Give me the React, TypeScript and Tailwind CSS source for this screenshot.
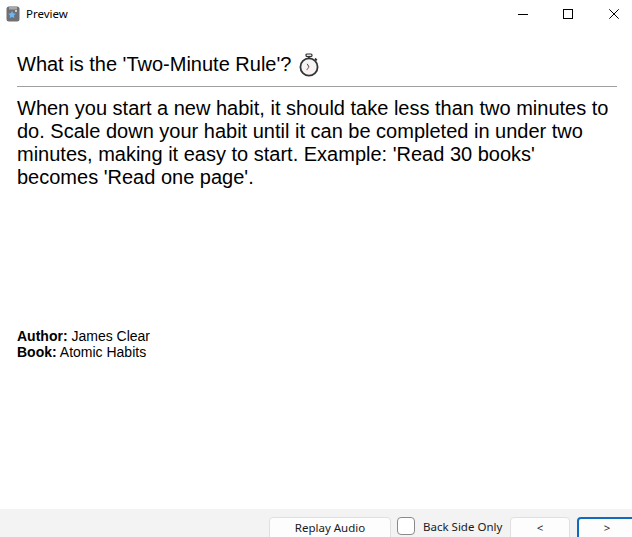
export default function App() {
  return (
    <div className="w-[632px] h-[537px] overflow-hidden bg-white flex flex-col text-black" style={{ fontFamily: '"Liberation Sans", Arial, sans-serif' }}>
      <div className="h-[28px] shrink-0 flex items-center">
        <svg width="14" height="16" viewBox="0 0 14 16" className="ml-[6px] mr-[6px]">
          <rect x="0.5" y="0.5" width="13" height="15" rx="2.5" fill="#6f7074" />
          <rect x="3" y="0.5" width="8" height="3" fill="#a9a9ab" />
          <path d="M6 5l1.2 2.3 2.6.4-1.9 1.8.5 2.6L6 10.9l-2.4 1.2.5-2.6-1.9-1.8 2.6-.4z" fill="#6fb6f0" />
          <circle cx="10" cy="5" r="1" fill="#e8e8e8" />
        </svg>
        <span className="text-[11.5px] leading-none" style={{ fontFamily: '"Noto Sans", "Open Sans", sans-serif' }}>Preview</span>
        <div className="ml-auto flex items-center h-full pr-[13px]">
          <svg width="10" height="10"><path d="M0 5.5h10" stroke="#000" /></svg>
          <svg width="10" height="10" className="ml-[35px]"><rect x="0.5" y="0.5" width="9" height="9" fill="none" stroke="#000" /></svg>
          <svg width="10" height="10" className="ml-[36px]"><path d="M0.3 0.3l9.4 9.4M9.7 0.3l-9.4 9.4" stroke="#000" /></svg>
        </div>
      </div>
      <div className="flex-1 pl-[17px] pr-[15px] pt-[22px]">
        <div className="flex items-center h-[28px] text-[20px] leading-[28px]">
          <span>What is the 'Two-Minute Rule'?</span>
          <svg width="22" height="24" viewBox="0 0 22 24" className="ml-[7px] mt-[2px]">
            <rect x="8" y="1" width="6" height="2.6" rx="1" fill="#e8e8e8" stroke="#333" strokeWidth="1.2" />
            <path d="M11 3.5v2" stroke="#333" strokeWidth="1.6" />
            <path d="M17 5.5l1.8 1.8" stroke="#333" strokeWidth="1.8" />
            <circle cx="11" cy="14" r="8.6" fill="#f4f4f4" stroke="#333" strokeWidth="1.8" />
            <path d="M11 14l-1.8-3.2" stroke="#444" strokeWidth="1" />
            <path d="M11 14l-2.4 3" stroke="#e85050" strokeWidth="1.1" />
          </svg>
        </div>
        <div className="mt-[8px] h-px bg-[#a0a0a0]" />
        <p className="mt-[10px] text-[20px] leading-[23px]">
          When you start a new habit, it should take less than two minutes to do. Scale down your habit until it can be completed in under two minutes, making it easy to start. Example: 'Read 30 books' becomes 'Read one page'.
        </p>
        <div className="mt-[139px] text-[14px] leading-[16px]">
          <div><b>Author:</b> James Clear</div>
          <div><b>Book:</b> Atomic Habits</div>
        </div>
      </div>
      <div className="h-[28px] shrink-0 bg-[#f3f3f3] pt-[8px] flex items-start text-[11.5px] whitespace-nowrap" style={{ fontFamily: '"Noto Sans", "Open Sans", sans-serif' }}>
        <button className="shrink-0 ml-[269px] w-[122px] h-[24px] bg-[#fdfdfd] border border-[#e0e0e0] rounded-[4px] text-[#1a1a1a] pb-[3px]">Replay Audio</button>
        <span className="shrink-0 ml-[6px] w-[18px] h-[18px] bg-white border border-[#8a8a8a] rounded-[4px]" />
        <span className="shrink-0 ml-[8px] w-[78px] text-[#1a1a1a] leading-[19px]">Back Side Only</span>
        <button className="shrink-0 ml-[9px] w-[60px] h-[24px] bg-[#fdfdfd] border border-[#e0e0e0] rounded-[4px] text-[#1a1a1a] pb-[3px]">&lt;</button>
        <button className="shrink-0 ml-[7px] w-[60px] h-[24px] bg-[#fdfdfd] border-2 border-[#0f6cbd] rounded-[4px] text-[#1a1a1a] pb-[3px]">&gt;</button>
      </div>
    </div>
  );
}
